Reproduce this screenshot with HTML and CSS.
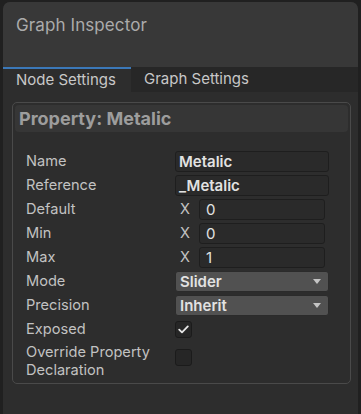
FILE: index.html
```html
<!DOCTYPE html>
<html lang="en">
<head>
  <meta charset="utf-8" />
  <title>Graph Inspector</title>
  <link rel="stylesheet" href="styles.css">
</head>
<body>
  <div class="window">
    <div class="header">
      <h1>Graph Inspector</h1>
    </div>

    <div class="tabs">
      <div class="tab active">Node Settings</div>
      <div class="tab">Graph Settings</div>
    </div>

    <div class="content">
      <div class="panel">
        <div class="panel-title">Property: Metalic</div>

        <div class="rows">
          <div class="label">Name</div>
          <div class="field text">Metalic</div>

          <div class="label">Reference</div>
          <div class="field text">_Metalic</div>

          <div class="label">Default</div>
          <div class="vec"><span class="axis">X</span><div class="field num">0</div></div>

          <div class="label">Min</div>
          <div class="vec"><span class="axis">X</span><div class="field num">0</div></div>

          <div class="label">Max</div>
          <div class="vec"><span class="axis">X</span><div class="field num">1</div></div>

          <div class="label">Mode</div>
          <div class="field dropdown">Slider<span class="arrow"></span></div>

          <div class="label">Precision</div>
          <div class="field dropdown">Inherit<span class="arrow"></span></div>

          <div class="label">Exposed</div>
          <div class="check-cell">
            <span class="checkbox">
              <svg width="11" height="9" viewBox="0 0 11 9"><path d="M1.2 4.6 L4 7.4 L9.8 1.4" fill="none" stroke="#e6e6e6" stroke-width="1.8" stroke-linecap="round" stroke-linejoin="round"/></svg>
            </span>
          </div>

          <div class="label two-line">Override Property Declaration</div>
          <div class="check-cell"><span class="checkbox"></span></div>
        </div>
      </div>
    </div>
  </div>
</body>
</html>
```

FILE: styles.css
```css
* {
  box-sizing: border-box;
}

body {
  margin: 0;
  background: #202020;
  font-family: 'Inter', 'Noto Sans', sans-serif;
  width: 361px;
  height: 414px;
  overflow: hidden;
}

.window {
  margin: 2px 3px 0 3px;
  height: 412px;
  border-radius: 7px 7px 0 0;
  overflow: hidden;
  background: #2d2d2d;
  display: flex;
  flex-direction: column;
}

.header {
  height: 65px;
  background: #383838;
  padding: 13px 0 0 13px;
}

.header h1 {
  margin: 0;
  font-size: 17px;
  font-weight: 400;
  color: #ababab;
  letter-spacing: 0.1px;
}

.tabs {
  display: flex;
  height: 25px;
  background: #272727;
}

.tab {
  font-size: 15px;
  color: #c8c8c8;
  padding: 1px 0 0 13px;
  line-height: 22px;
  width: 128px;
}

.tab.active {
  background: #2d2d2d;
  border-top: 2px solid #3b78b8;
  line-height: 21px;
  padding-top: 0;
}

.content {
  flex: 1;
  padding: 10px 7px 0 9px;
}

.panel {
  border: 1px solid #4a4a4a;
  border-radius: 5px;
  padding: 2px 2px 6px 2px;
  height: 282px;
}

.panel-title {
  background: #363636;
  border-radius: 4px;
  height: 27px;
  padding-left: 4px;
  font-size: 18px;
  font-weight: 700;
  color: #9d9d9d;
  line-height: 27px;
}

.rows {
  display: grid;
  grid-template-columns: 149px 154px;
  grid-auto-rows: 24px;
  padding: 17px 0 0 11px;
  align-items: center;
}

.label {
  font-size: 14.6px;
  color: #c2c2c2;
  line-height: 18px;
}

.label.two-line {
  grid-row: span 2;
  align-self: start;
  padding-top: 2px;
}

.field {
  height: 21px;
  border: 1px solid #1e1e1e;
  border-radius: 3px;
  background: #2a2a2a;
  font-size: 15px;
  color: #e2e2e2;
  padding-left: 3px;
  line-height: 19px;
}

.field.text {
  font-weight: 600;
}

.vec {
  display: flex;
  align-items: center;
}

.axis {
  width: 24px;
  padding-left: 5px;
  font-size: 14.6px;
  color: #c2c2c2;
}

.field.num {
  width: 126px;
  padding-left: 6px;
}

.field.dropdown {
  position: relative;
  background: #515151;
  border-color: #2b2b2b;
  font-weight: 600;
  padding-left: 4px;
}

.arrow {
  position: absolute;
  right: 7px;
  top: 7px;
  width: 0;
  height: 0;
  border-left: 4px solid transparent;
  border-right: 4px solid transparent;
  border-top: 5px solid #c4c4c4;
}

.two-line + .check-cell {
  grid-row: span 2;
  align-self: start;
  padding-top: 8px;
}

.checkbox {
  display: flex;
  align-items: center;
  justify-content: center;
  width: 17px;
  height: 17px;
  border: 1px solid #1b1b1b;
  border-radius: 3px;
  background: #262626;
}
```
